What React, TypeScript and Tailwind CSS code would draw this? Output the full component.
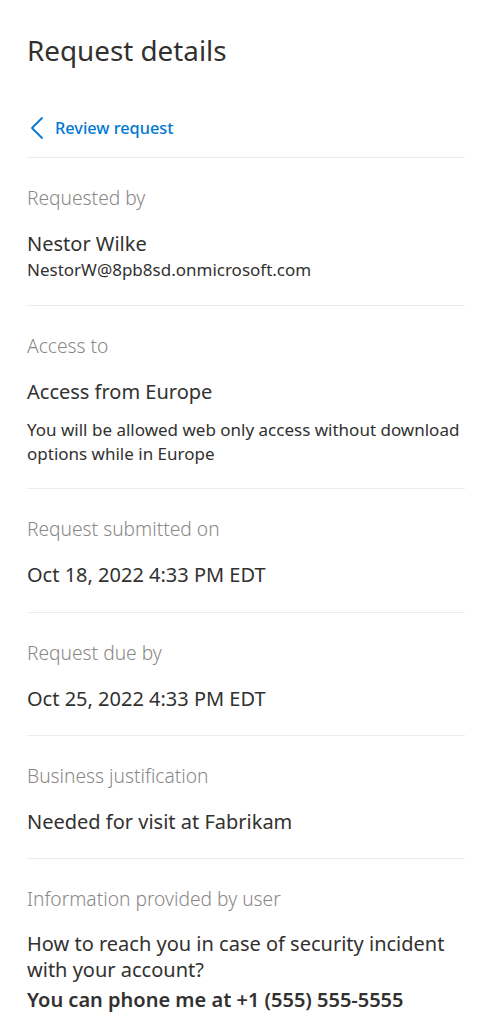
import React from "react";

const font = { fontFamily: '"Noto Sans", "Open Sans", sans-serif' };

function Section({ label, children, pb = "pb-[22px]" }: { label: string; children: React.ReactNode; pb?: string }) {
  return (
    <div className={"border-t border-[#edebe9] pt-[26px] " + pb}>
      <div className="text-[19.2px] leading-[28px] font-light text-[#8a8886]">{label}</div>
      <div className="mt-[18px]">{children}</div>
    </div>
  );
}

export default function App() {
  return (
    <div className="min-h-screen bg-white pl-[27px] pr-[30px] text-[#323130]" style={font}>
      <h1 className="pt-[32px] text-[27.8px] leading-[36px] font-normal text-[#323130]">Request details</h1>
      <div className="mt-[48px] pb-[17px] flex items-center gap-[10px] text-[#0078d4]">
        <svg width="16" height="24" viewBox="0 0 16 24" fill="none" className="ml-[2px]">
          <path d="M13 2 L3 12 L13 22" stroke="#0078d4" strokeWidth="1.8" strokeLinecap="round" strokeLinejoin="round" />
        </svg>
        <span className="text-[16.3px] leading-[24px] font-medium">Review request</span>
      </div>
      <Section label="Requested by" pb="pb-[23px]">
        <div className="text-[20px] leading-[28px]">Nestor Wilke</div>
        <div className="text-[17px] leading-[24px]">NestorW@8pb8sd.onmicrosoft.com</div>
      </Section>
      <Section label="Access to">
        <div className="text-[20px] leading-[28px]">Access from Europe</div>
        <div className="mt-[12px] text-[17px] leading-[24px]">
          You will be allowed web only access without download options while in Europe
        </div>
      </Section>
      <Section label="Request submitted on" pb="pb-[23px]">
        <div className="text-[20px] leading-[28px]">Oct 18, 2022 4:33 PM EDT</div>
      </Section>
      <Section label="Request due by">
        <div className="text-[20px] leading-[28px]">Oct 25, 2022 4:33 PM EDT</div>
      </Section>
      <Section label="Business justification">
        <div className="text-[20px] leading-[28px]">Needed for visit at Fabrikam</div>
      </Section>
      <Section label="Information provided by user" pb="pb-[20px]">
        <div className="text-[20px] leading-[26px]">How to reach you in case of security incident with your account?</div>
        <div className="mt-[3px] text-[20px] leading-[28px] font-semibold">You can phone me at +1 (555) 555-5555</div>
      </Section>
    </div>
  );
}
